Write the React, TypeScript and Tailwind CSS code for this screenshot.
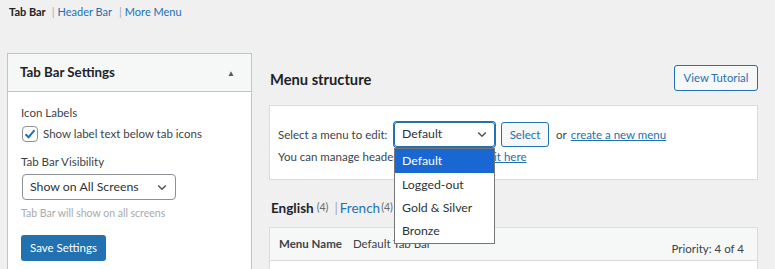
import React from "react";

const Chevron = ({ className = "" }: { className?: string }) => (
  <svg width="10" height="7" viewBox="0 0 10 7" className={className}>
    <path d="M1.2 1.5 L5 5.2 L8.8 1.5" fill="none" stroke="#50575e" strokeWidth="1.6" />
  </svg>
);

export default function App() {
  return (
    <div
      className="w-[775px] h-[269px] overflow-hidden bg-[#f0f0f1] text-[#3c434a] px-[7px] pt-[2px] relative"
      style={{ fontFamily: 'Lato, "Noto Sans", sans-serif' }}
    >
      {/* top tabs */}
      <div className="ml-[2px] h-[20px] flex items-center text-[11px]">
        <span className="font-bold text-[#1d2327]">Tab Bar</span>
        <span className="ml-[6px] mr-[3px] text-[#a7aaad]">|</span>
        <span className="text-[#2271b1]">Header Bar</span>
        <span className="ml-[7px] mr-[3px] text-[#a7aaad]">|</span>
        <span className="text-[#2271b1]">More Menu</span>
      </div>

      <div className="flex mt-[31px]">
        {/* left panel */}
        <div className="w-[245px] shrink-0 border border-[#c3c4c7] bg-white h-[260px]">
          <div className="h-[38px] bg-[#f6f7f7] border-b border-[#c3c4c7] flex items-center justify-between pl-[12px] pr-[16px]">
            <span className="text-[13.3px] font-bold text-[#1d2327]">Tab Bar Settings</span>
            <span className="text-[8px] text-[#50575e] leading-none">▲</span>
          </div>
          <div className="pl-[13px] pt-[12px] text-[11.5px]">
            <div className="h-[18px] leading-[18px]">Icon Labels</div>
            <div className="flex items-center mt-[4px] h-[16px]">
              <span className="ml-[1px] w-[16px] h-[16px] rounded-[4px] border border-[#8c8f94] bg-white flex items-center justify-center">
                <svg width="14" height="14" viewBox="0 0 14 14">
                  <path d="M2.5 7.2 L5.6 10.2 L11.5 3.2" fill="none" stroke="#2271b1" strokeWidth="2" />
                </svg>
              </span>
              <span className="ml-[5px]">Show label text below tab icons</span>
            </div>
            <div className="h-[18px] leading-[18px] mt-[11px]">Tab Bar Visibility</div>
            <div className="mt-[3px] ml-[1px] w-[154px] h-[26px] border border-[#8c8f94] rounded-[4px] flex items-center justify-between pl-[7px] pr-[8px] text-[12.3px] text-[#2c3338]">
              <span>Show on All Screens</span>
              <Chevron />
            </div>
            <div className="mt-[4px] text-[10.5px] text-[#a7aaad] h-[18px] leading-[18px]">Tab Bar will show on all screens</div>
            <div className="mt-[13px] w-[85px] h-[26px] rounded-[3px] bg-[#2271b1] text-white text-[11.5px] flex items-center justify-center">
              Save Settings
            </div>
          </div>
        </div>

        {/* right column */}
        <div className="ml-[17px] w-[489px] shrink-0">
          <div className="mt-[12px] h-[26px] flex items-center justify-between">
            <span className="text-[14.7px] font-bold text-[#1d2327] ml-[1px] mt-[2px]">Menu structure</span>
            <div className="h-[26px] w-[84px] border border-[#2271b1] rounded-[3px] bg-[#f6f7f7] text-[#2271b1] text-[11.3px] flex items-center justify-center">
              View Tutorial
            </div>
          </div>

          <div className="mt-[14px] h-[75px] bg-white border border-[#dcdcde] pl-[8px] pt-[16px] text-[11.5px]">
            <div className="flex items-center h-[25px]">
              <span className="w-[116px]">Select a menu to edit:</span>
              <div className="relative w-[101px] h-[25px] border border-[#2271b1] rounded-[3px] shadow-[0_0_0_1px_#2271b1] flex items-center justify-between pl-[7px] pr-[7px] text-[12.3px] text-[#2c3338]">
                <span>Default</span>
                <Chevron />
                <div className="absolute left-[-1px] top-[25px] w-[101px] border border-[#767676] bg-white text-[12.3px] text-[#2c3338] z-10">
                  <div className="h-[24px] pl-[7px] flex items-center bg-[#1967d2] text-white">Default</div>
                  <div className="h-[24px] pl-[7px] flex items-center">Logged-out</div>
                  <div className="h-[23px] pl-[7px] flex items-center">Gold &amp; Silver</div>
                  <div className="h-[23px] pl-[7px] flex items-center">Bronze</div>
                </div>
              </div>
              <div className="ml-[6px] h-[25px] w-[48px] border border-[#2271b1] rounded-[3px] bg-[#f6f7f7] text-[#2271b1] flex items-center justify-center">
                Select
              </div>
              <span className="ml-[7px]">or</span>
              <span className="ml-[4px] text-[#2271b1] underline">create a new menu</span>
            </div>
            <div className="mt-[1px] h-[18px] leading-[18px] whitespace-nowrap">
              You can manage header menu by <span className="text-[#2271b1] underline">selecting it here</span>
            </div>
          </div>

          <div className="mt-[19px] h-[18px] flex items-center text-[13.5px] ml-[2px]">
            <span className="font-bold text-[#1d2327]">English</span>
            <span className="ml-[3px] text-[10.5px] text-[#646970]">(4)</span>
            <span className="ml-[6px] mr-[2px] text-[#a7aaad]">|</span>
            <span className="text-[#2271b1]">French</span>
            <span className="ml-[1px] text-[10.5px] text-[#646970]">(4)</span>
          </div>

          <div className="mt-[10px] border border-[#dcdcde] bg-white h-[60px]">
            <div className="h-[33px] bg-[#f6f7f7] border-b border-[#dcdcde] flex justify-between pl-[9px] pr-[13px] text-[11.5px]">
              <div className="flex items-center">
                <span className="font-bold text-[#3c434a]">Menu Name</span>
                <span className="ml-[11px]">Default Tab Bar</span>
              </div>
              <div className="flex items-end pb-[3px]">Priority: 4 of 4</div>
            </div>
          </div>
        </div>
      </div>
    </div>
  );
}
